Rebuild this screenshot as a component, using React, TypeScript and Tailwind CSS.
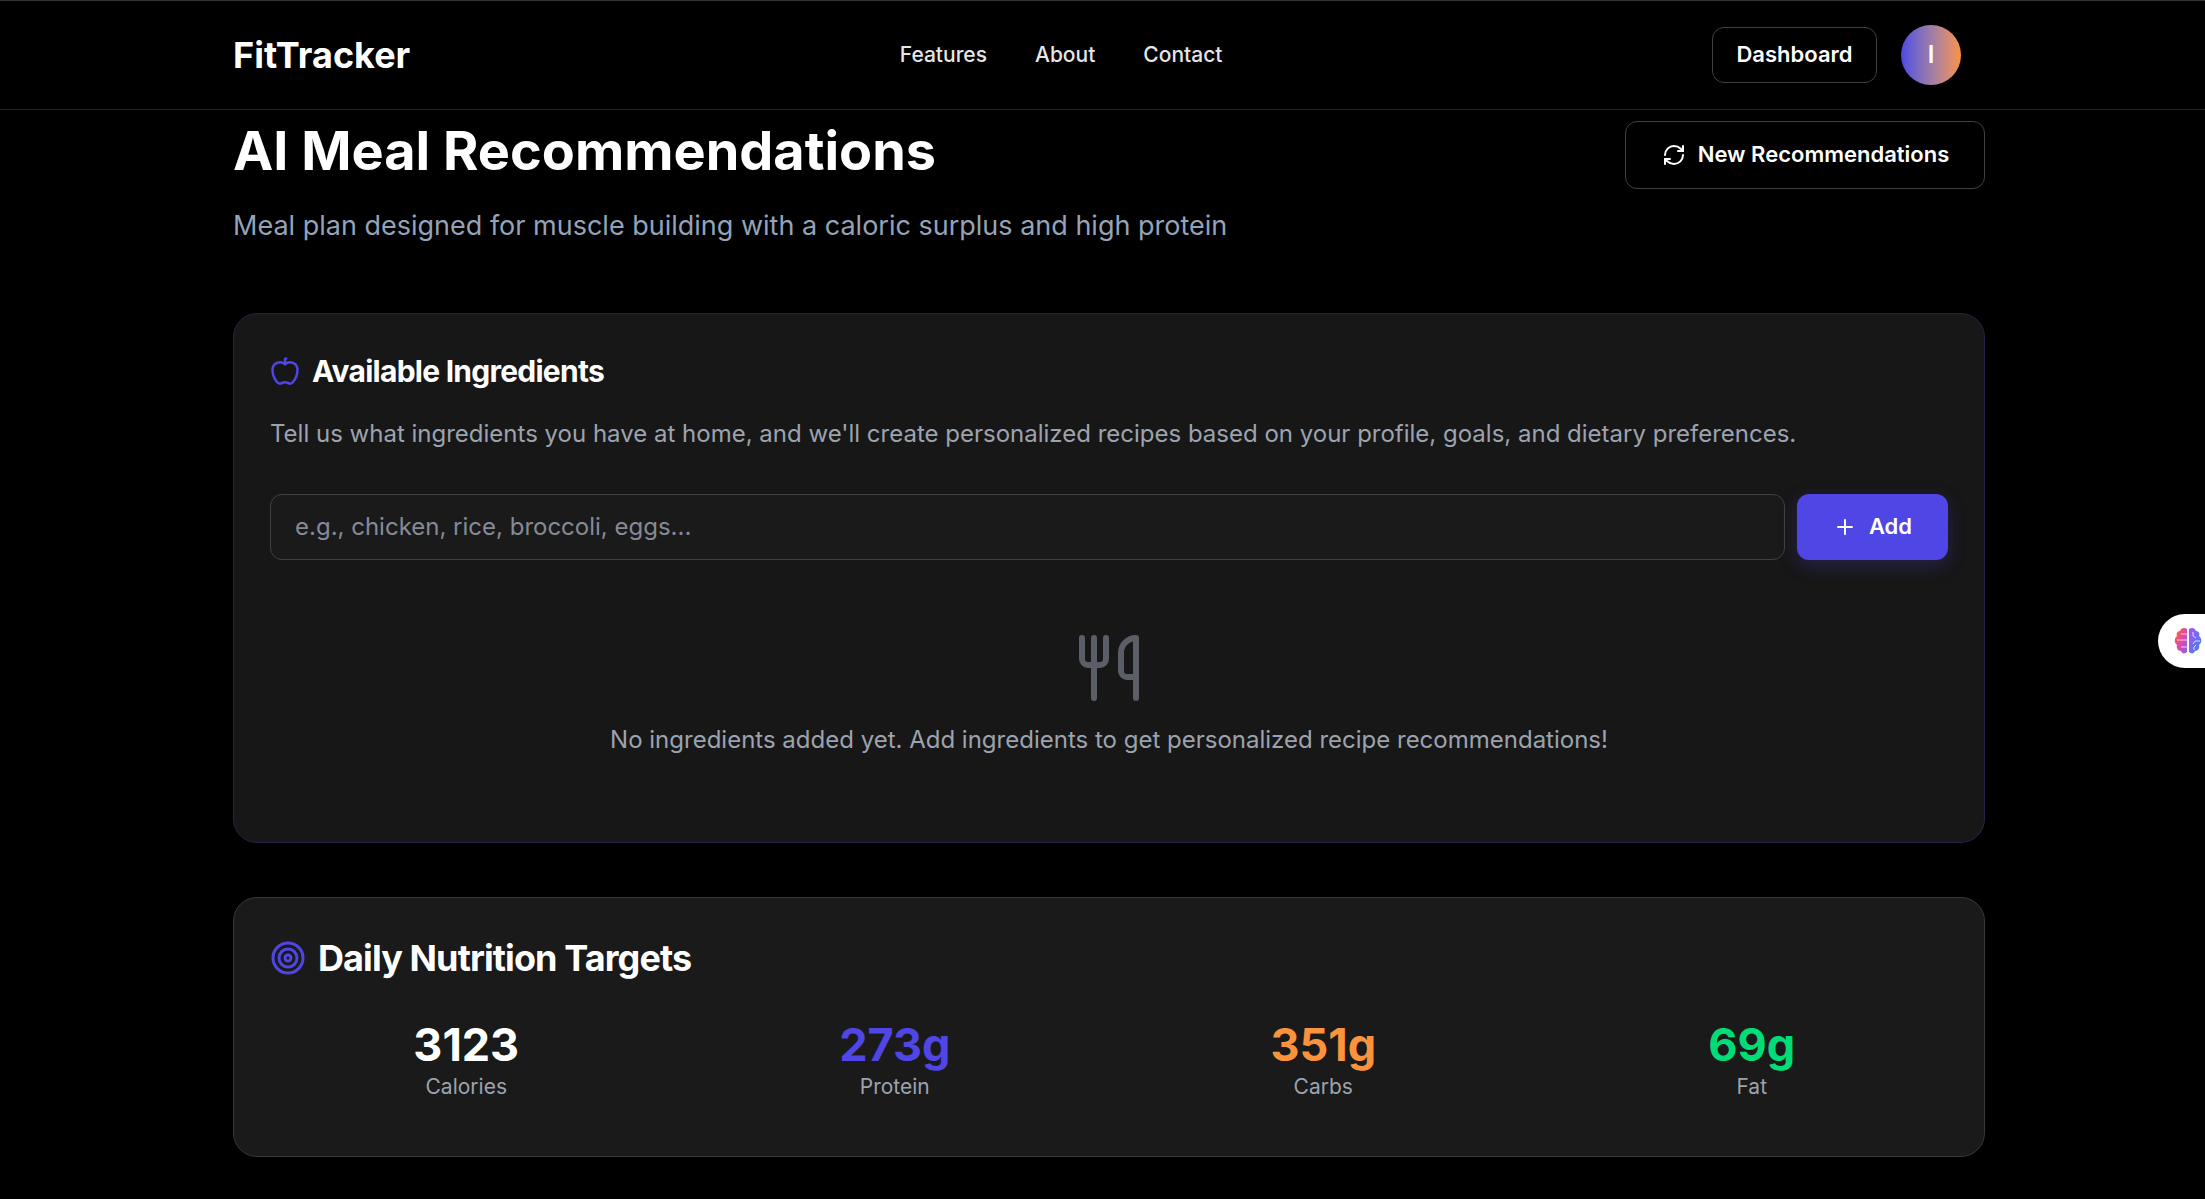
import { Apple, Plus, RefreshCw, Target, Utensils } from 'lucide-react';

const stats = [
  { value: '3123', label: 'Calories', color: 'text-white' },
  { value: '273g', label: 'Protein', color: 'text-[#4f46e5]' },
  { value: '351g', label: 'Carbs', color: 'text-[#fb923c]' },
  { value: '69g', label: 'Fat', color: 'text-[#00dc78]' },
];

function BrainBadge() {
  return (
    <div className="fixed right-0 top-[614px] flex h-[54px] w-[47px] items-center rounded-l-[27px] bg-white pl-[15px]">
      <svg width="30" height="30" viewBox="0 0 30 30" fill="none">
        <defs>
          <linearGradient id="brainLeft" x1="0" y1="0" x2="1" y2="1">
            <stop offset="0" stopColor="#f97316" />
            <stop offset="0.45" stopColor="#ec4899" />
            <stop offset="1" stopColor="#8b5cf6" />
          </linearGradient>
          <linearGradient id="brainRight" x1="0" y1="0" x2="1" y2="1">
            <stop offset="0" stopColor="#a855f7" />
            <stop offset="1" stopColor="#3b82f6" />
          </linearGradient>
        </defs>
        <path d="M14 3c-3-2-6-1-7 2-3 0-4 3-3 5-3 2-3 7 0 9-1 3 1 6 4 6 1 3 4 3 6 1z" fill="url(#brainLeft)" />
        <path d="M16 3c3-2 6-1 7 2 3 0 4 3 3 5 3 2 3 7 0 9 1 3-1 6-4 6-1 3-4 3-6 1z" fill="url(#brainRight)" />
        <path d="M4 14h10M8 8h6M8 21h6M20 6v4l3 2M27 15h-5l-2 3M21 24v-3l2-2" stroke="#fff" strokeOpacity="0.75" strokeWidth="1" />
      </svg>
    </div>
  );
}

export default function App() {
  return (
    <div className="min-h-[1199px] overflow-hidden bg-black font-['Inter',sans-serif] text-white">
      <nav className="h-[110px] border-t border-b border-t-[#333] border-b-[#222]">
        <div className="ml-[233px] flex h-[108px] w-[1728px] items-center justify-between">
          <div className="text-[36px] font-bold">FitTracker</div>
          <div className="flex gap-12 text-[21px] font-medium text-[#e5e5e5]">
            <span>Features</span>
            <span>About</span>
            <span>Contact</span>
          </div>
          <div className="flex items-center gap-6">
            <button className="h-14 w-[165px] rounded-xl border border-[#404040] pb-px text-[22px] font-semibold">Dashboard</button>
            <div className="flex size-[60px] items-center justify-center rounded-full bg-gradient-to-r from-[#4f46e5] to-[#fb923c] text-[24px] font-semibold">I</div>
          </div>
        </div>
      </nav>

      <main className="ml-[233px] w-[1752px]">
        <div className="flex items-start justify-between">
          <div>
            <h1 className="text-[54px] leading-[81px] font-bold">AI Meal Recommendations</h1>
            <p className="mt-[15px] text-[27px] leading-[40px] text-[#94a3b8]">Meal plan designed for muscle building with a caloric surplus and high protein</p>
          </div>
          <button className="mt-[11px] flex h-[68px] w-[360px] items-center justify-center gap-3 rounded-xl border border-[#404040] pb-px pl-px text-[22px] font-semibold">
            <RefreshCw size={24} />
            New Recommendations
          </button>
        </div>

        <section className="mt-[67px] h-[530px] rounded-3xl border border-[#25234a] bg-[#171717] px-[36px] pt-[36px]">
          <div className="flex items-center gap-[12px]">
            <Apple size={30} className="text-[#4f46e5]" />
            <h2 className="text-[30px] leading-[42px] font-bold tracking-tight">Available Ingredients</h2>
          </div>
          <p className="mt-[24px] text-[24px] leading-[36px] text-[#9ca3af]">
            Tell us what ingredients you have at home, and we'll create personalized recipes based on your profile, goals, and dietary preferences.
          </p>
          <div className="mt-[42px] flex gap-3">
            <input
              readOnly
              placeholder="e.g., chicken, rice, broccoli, eggs..."
              className="h-[66px] flex-1 rounded-xl border border-[#404040] bg-[#1a1a1a] px-6 pb-px text-[24px] outline-none placeholder:text-[#858a96]"
            />
            <button className="flex h-[66px] w-[151px] items-center justify-center gap-3 rounded-xl bg-[#4f46e5] pb-px text-[22px] font-semibold shadow-[0_6px_18px_rgba(79,70,229,0.25)]">
              <Plus size={24} />
              Add
            </button>
          </div>
          <div className="mt-[72px] flex flex-col items-center">
            <Utensils size={72} className="text-[#5b5e66]" />
            <p className="mt-[18px] text-[24px] leading-[36px] text-[#9ca3af]">
              No ingredients added yet. Add ingredients to get personalized recipe recommendations!
            </p>
          </div>
        </section>

        <section className="mt-[54px] h-[260px] rounded-3xl border border-[#383838] bg-[#1a1a1a] px-[36px] pt-[33px]">
          <div className="flex items-center gap-3">
            <Target size={36} className="text-[#4f46e5]" />
            <h2 className="text-[36px] leading-[54px] font-bold tracking-tight">Daily Nutrition Targets</h2>
          </div>
          <div className="mt-[33px] grid grid-cols-4 gap-9">
            {stats.map(s => (
              <div key={s.label} className="text-center">
                <div className={`text-[45px] leading-[54px] font-bold ${s.color}`}>{s.value}</div>
                <div className="text-[21px] leading-[30px] text-[#9ca3af]">{s.label}</div>
              </div>
            ))}
          </div>
        </section>
      </main>

      <BrainBadge />
    </div>
  );
}
